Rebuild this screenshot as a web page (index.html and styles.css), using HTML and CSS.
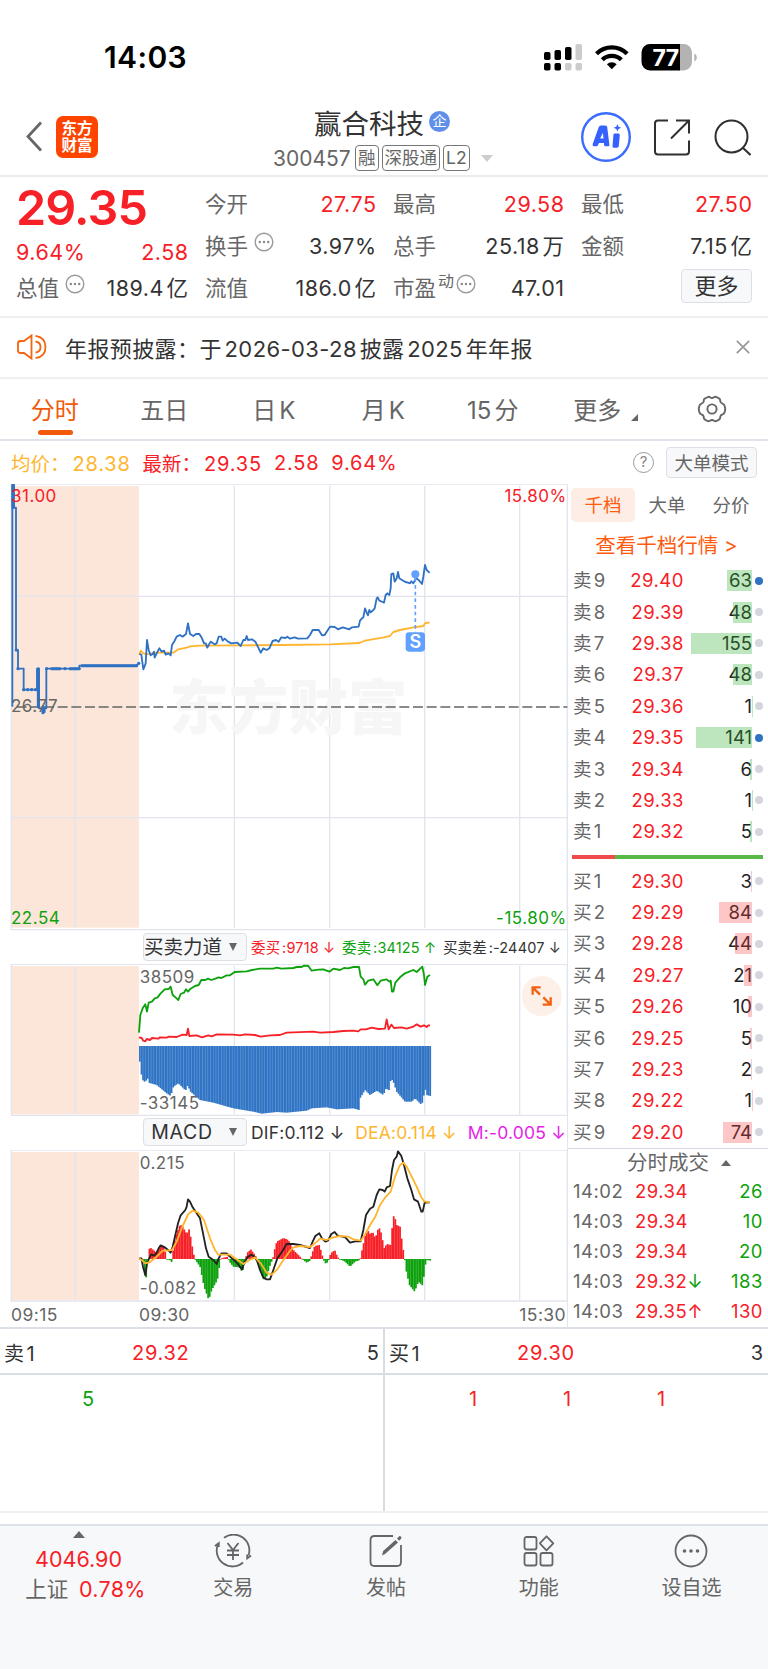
FILE: index.html
```html
<!DOCTYPE html>
<html lang="zh-CN">
<head>
  <meta charset="UTF-8">
  <meta name="viewport" content="width=device-width, initial-scale=1.0">
  <title>赢合科技 300457</title>
  <link rel="stylesheet" href="styles.css">
</head>
<body>
  <svg width="0" height="0" class="defs">
    <symbol id="dots" viewBox="0 0 20 20">
      <circle cx="10" cy="10" r="8.800" fill="none" stroke="#999" stroke-width="1.400"/>
      <circle cx="5.800" cy="10" r="1.200" fill="#888"/><circle cx="10" cy="10" r="1.200" fill="#888"/><circle cx="14.200" cy="10" r="1.200" fill="#888"/>
    </symbol>
  </svg>

  <!-- 状态栏 -->
  <div class="status-bar">
    <span class="clock">14:03</span>
    <svg class="status-icons" width="154" height="28" viewBox="0 0 154 28">
      <g fill="#000">
        <rect x="1" y="9" width="6.5" height="8" rx="1.8"/>
        <rect x="11.5" y="7" width="6.5" height="10" rx="1.8"/>
        <rect x="22" y="4" width="6.5" height="13" rx="1.8"/>
        <rect x="1" y="20" width="6.5" height="7.5" rx="1.8"/>
        <rect x="11.5" y="20" width="6.5" height="7.5" rx="1.8"/>
      </g>
      <g fill="#ccc">
        <rect x="32.5" y="1" width="6.5" height="16" rx="1.8"/>
        <rect x="22" y="20" width="6.5" height="7.5" rx="1.8"/>
        <rect x="32.5" y="20" width="6.5" height="7.5" rx="1.8"/>
      </g>
      <g fill="none" stroke="#000" stroke-width="4.2">
        <path d="M53.5 10.8a21.5 21.5 0 0 1 30.6 0"/>
        <path d="M59.3 16.8a13.4 13.4 0 0 1 19 0"/>
      </g>
      <path d="M68.8 26.3l-4.9-5a7 7 0 0 1 9.8 0z"/>
      <path d="M136 1h4.500a8.500 8.500 0 0 1 8.500 8.500v9.500a8.500 8.500 0 0 1-8.500 8.500H136z" fill="#b3b3b3"/>
      <path d="M107 1h30v26.500h-30a8.500 8.500 0 0 1-8.500-8.500v-9.500a8.500 8.500 0 0 1 8.500-8.500z"/>
      <path d="M151.300 10.500q2.500 1 2.500 4t-2.500 4z" fill="#b3b3b3"/>
      <text x="109.500" y="22.500" class="battery-text">77</text>
    </svg>
  </div>

  <!-- 标题栏 -->
  <header class="header">
    <div class="header-left">
      <svg width="18" height="31" viewBox="0 0 18 31"><path d="M16 1.500L3 15.500L16 29.500" fill="none" stroke="#666" stroke-width="2.800"/></svg>
      <div class="logo"><span>东方</span><span>财富</span></div>
    </div>
    <div class="stock">
      <div class="stock-name">赢合科技<i class="qi">企</i></div>
      <div class="stock-code">
        <span class="code">300457</span>
        <span class="tag">融</span><span class="tag">深股通</span><span class="tag">L2</span>
        <i class="tri-down"></i>
      </div>
    </div>
    <div class="header-right">
      <svg width="50" height="50" viewBox="0 0 50 50">
        <circle cx="25" cy="25" r="23.800" fill="#fff" stroke="#3b6bff" stroke-width="2.400"/>
        <path d="M11.500 32.500l6.300-17.500q.6-1.600 2.200-1.600h4.300q1.700 0 1.900 1.700l2.200 17.600q.1 1.500-1.200 1.500h-2.700q-1.300 0-1.400-1.300l-.2-2h-5l-.8 2q-.5 1.300-1.700 1.300h-2.700q-1.400 0-.9-1.700z" fill="#3562ff"/>
        <path d="M19.200 26.500h3.300l-.6-5.800z" fill="#fff"/>
        <path d="M33.200 21.500h4.200q1.600 0 1.400 1.600l-1 11q-.2 1.700-1.700 1.700h-3.200q-1.500 0-1.400-1.600l.9-11q.1-1.600.8-1.700z" fill="#3562ff"/>
        <path d="M36.400 12l1.100 2.700l2.700 1.100l-2.700 1.100l-1.100 2.700l-1.100-2.700l-2.700-1.100l2.700-1.100z" fill="#3562ff"/>
      </svg>
      <svg class="share" width="36" height="37" viewBox="0 0 36 37" fill="none" stroke="#2f2f2f" stroke-width="2">
        <path d="M14 1.500H4q-3 0-3 3v28q0 3 3 3h28q3 0 3-3v-11"/>
        <path d="M22 1.500h13V14.500M35 1.500L17 19.500"/>
      </svg>
      <svg width="37" height="37" viewBox="0 0 37 37" fill="none" stroke="#2f2f2f" stroke-width="2">
        <circle cx="17.500" cy="17.500" r="16"/><path d="M28.500 28.500l8 7.500"/>
      </svg>
    </div>
  </header>

  <!-- 行情 -->
  <section class="quote">
    <div class="quote-main">
      <div class="price">29.35</div>
      <div class="pair red"><b>9.64%</b><b>2.58</b></div>
      <div class="pair"><span>总值<svg class="more-dot"><use href="#dots"/></svg></span><b>189.4亿</b></div>
    </div>
    <div class="quote-col">
      <div class="pair"><span>今开</span><b class="red">27.75</b></div>
      <div class="pair"><span>换手<svg class="more-dot"><use href="#dots"/></svg></span><b>3.97%</b></div>
      <div class="pair"><span>流值</span><b>186.0亿</b></div>
    </div>
    <div class="quote-col">
      <div class="pair"><span>最高</span><b class="red">29.58</b></div>
      <div class="pair"><span>总手</span><b>25.18万</b></div>
      <div class="pair"><span>市盈<sup>动</sup><svg class="more-dot tight"><use href="#dots"/></svg></span><b>47.01</b></div>
    </div>
    <div class="quote-col">
      <div class="pair"><span>最低</span><b class="red">27.50</b></div>
      <div class="pair"><span>金额</span><b>7.15亿</b></div>
      <div class="pair end"><button class="more-btn">更多</button></div>
    </div>
  </section>

  <div class="notice">
    <svg width="31" height="26" viewBox="0 0 31 26" fill="none" stroke="#f5640f" stroke-width="1.800">
      <path d="M14.500 1.500v23l-7.500-5.500H3.500q-2.500 0-2.500-2.500v-7q0-2.500 2.500-2.500H7z"/>
      <path d="M18.500 7.500q5 .6 5 5.500t-5 5.500M18.500 1.800q10 1.500 10 11.200t-10 11.200"/>
    </svg>
    <span class="notice-text">年报预披露：于2026-03-28披露2025年年报</span>
    <svg width="14" height="14" viewBox="0 0 14 14"><path d="M.8.8l12.400 12.400M13.200.8L.8 13.200" stroke="#999" stroke-width="1.700"/></svg>
  </div>

  <nav class="tabs">
    <span class="active">分时</span>
    <span>五日</span>
    <span>日K</span>
    <span>月K</span>
    <span>15分</span>
    <span class="tab-more">更多<i class="corner"></i></span>
    <span>
      <svg width="30" height="28" viewBox="0 0 30 28" fill="none" stroke="#666" stroke-width="1.900">
        <path d="M10.500 2.300Q12 1.200 13 2.300Q15 3.700 17 2.300Q18.500 1.200 20 2.300L22.300 3.600Q23.500 4.500 23.200 6.200Q23.500 8.300 25.800 8.800Q27.200 9.300 27.600 10.800Q28.800 14 27.600 17.200Q27.200 18.700 25.800 19.200Q23.500 19.700 23.200 21.800Q23.500 23.500 22.300 24.400L20 25.700Q18.500 26.800 17 25.700Q15 24.300 13 25.700Q11.500 26.800 10 25.700L7.700 24.400Q6.500 23.500 6.800 21.800Q6.500 19.700 4.200 19.200Q2.800 18.700 2.400 17.200Q1.200 14 2.400 10.800Q2.800 9.300 4.200 8.800Q6.500 8.300 6.800 6.200Q6.500 4.500 7.700 3.600Z"/>
        <circle cx="15" cy="14" r="4.600"/>
      </svg>
    </span>
  </nav>

  <div class="info">
    <span class="avg">均价：<b>28.38</b></span>
    <span class="red">最新：<b>29.35</b></span>
    <b class="red">2.58</b>
    <b class="red">9.64%</b>
    <i class="help">?</i>
    <button class="big-btn">大单模式</button>
  </div>

  <main class="board">
    <div class="charts">
      <!-- 分时走势 -->
      <svg class="chart" width="568" height="447" viewBox="0 312 1704 1341">
        <rect x="33" y="318" width="384" height="1325" fill="#fce6da"/>
        <g class="grid">
          <path d="M33 312H1704M33 649H1702M33 1313H1702M33 1649H1704"/>
          <path d="M34 312V1650M225 318V1643M703 318V1643M989 318V1643M1274 318V1643M1559 318V1643M1702 312V1653"/>
        </g>
        <text x="508" y="1048" class="watermark" textLength="714">东方财富</text>
        <path class="zero" d="M50 981H1702"/>
        <path class="line avg-line" d="M418 825L422 812L430 820L440 823L470 818L520 818L535 808L560 803L570 799L600 797L720 796L850 795L990 793L1078 789L1095 782L1130 776L1152 772L1170 768L1180 756L1200 750L1240 742L1270 738L1276 729L1289 728"/>
        <path class="line price-line" d="M37 980V315H42V383H48V810H54V866H71V929H111V866H117V985H130V996H134V985H139V866H238V857H408L417 850"/>
        <path d="M39 315V383M155 866H180M210 866H238M246 857H410M115 866V980M129 980V998" stroke="#2f72c4" stroke-width="9" stroke-linecap="round"/>
        <g fill="#2f72c4">
          <circle cx="71" cy="929" r="5"/><circle cx="83" cy="929" r="5"/><circle cx="95" cy="929" r="5"/><circle cx="107" cy="929" r="5"/>
          <circle cx="54" cy="866" r="5"/><circle cx="140" cy="866" r="5"/><circle cx="195" cy="866" r="5"/><circle cx="416" cy="850" r="5"/><circle cx="49" cy="810" r="5"/>
        </g>
        <path class="line price-line" d="M418 822L424 824L430 868L437 850L441 780L446 810L452 826L458 822L462 815L464 833L470 820L478 805L485 815L492 812L497 824L505 820L512 826L516 795L524 782L530 770L540 765L548 770L558 762L564 730L570 762L580 768L588 762L598 762L606 775L612 790L617 790L622 803L632 785L644 793L650 790L656 770L664 770L668 782L674 776L684 785L694 790L712 788L722 798L730 780L736 780L740 768L744 780L756 778L766 785L776 805L782 818L790 805L800 810L808 805L818 783L828 780L836 785L844 772L856 774L862 770L870 776L884 772L894 776L922 775L930 765L938 750L956 750L966 766L974 765L982 752L990 740L1004 741L1014 748L1028 742L1048 748L1056 742L1076 740L1080 722L1086 715L1090 712L1095 685L1100 698L1104 706L1108 690L1112 697L1120 690L1124 685L1130 655L1133 652L1138 662L1148 666L1152 668L1157 645L1162 640L1168 645L1172 625L1174 582L1180 580L1184 605L1190 595L1194 576L1198 595L1206 600L1216 606L1224 608L1230 610L1234 604L1240 610L1248 594L1256 600L1266 612L1270 590L1275 555L1280 570L1285 575L1289 578"/>
        <path d="M1246 595V757" stroke="#62a0ff" stroke-width="5" stroke-dasharray="11 9"/>
        <circle cx="1246" cy="583" r="12" fill="#62a0ff"/>
        <rect x="1217" y="757" width="58" height="58" rx="10" fill="#62a0ff"/>
        <text x="1246" y="805" class="mark">S</text>
        <g class="axis">
          <text x="33" y="365" class="t-red">31.00</text>
          <text x="1700" y="365" class="t-red t-end">15.80%</text>
          <text x="33" y="996">26.77</text>
          <text x="33" y="1631" class="t-green">22.54</text>
          <text x="1700" y="1631" class="t-green t-end">-15.80%</text>
        </g>
      </svg>

      <div class="picker">
        <button class="picker-btn">买卖力道<i></i></button>
        <p class="small"><span class="red">委买:9718 ↓</span><span class="green">委卖:34125 ↑</span><span>买卖差:-24407 ↓</span></p>
      </div>

      <svg class="chart" width="568" height="152" viewBox="0 132 1704 456">
        <rect x="33" y="138" width="384" height="445" fill="#fce6da"/>
        <g class="grid">
          <path d="M33 133H1704M33 586H1704"/>
          <path d="M34 132V586M225 138V583M703 138V583M989 138V583M1274 138V583M1559 138V583M1702 132V588"/>
        </g>
        <g id="force"></g>
        <path class="line" stroke="#f72027" d="M417 352L425 354L430 362L436 364L440 357L450 360L456 354L475 356L480 352L500 353L505 350L530 351L548 344L560 345L564 326L568 348L590 346L606 352L625 346L635 349L650 343L700 344L720 346L735 343L765 345L782 350L810 346L840 345L860 338L940 335L960 338L1000 336L1030 333L1060 332L1075 334L1082 328L1098 328L1115 323L1135 327L1155 326L1160 298L1166 328L1174 314L1182 324L1205 322L1220 326L1240 320L1250 313L1262 320L1272 316L1280 321L1285 316L1290 316"/>
        <path class="line" stroke="#0da10d" d="M417 338L421 285L428 265L436 253L441 275L446 248L456 245L464 235L472 233L482 220L494 208L506 207L512 200L518 225L530 235L535 240L542 222L552 218L558 208L564 215L572 206L585 198L596 195L604 180L616 180L624 176L634 180L646 176L656 172L664 174L680 166L690 166L704 156L740 154L756 150L780 146L820 146L830 143L845 146L880 144L890 141L905 141L912 137L925 138L935 152L955 149L970 148L988 155L1000 146L1020 150L1032 144L1044 145L1060 141L1077 141L1082 170L1090 178L1095 194L1105 182L1120 178L1132 196L1142 182L1160 178L1168 185L1172 182L1176 215L1180 215L1186 188L1200 172L1215 160L1240 150L1250 156L1267 140L1272 165L1275 195L1282 170L1290 165"/>
        <g class="axis"><text x="419" y="189">38509</text><text x="419" y="566">-33145</text></g>
        <circle cx="1625" cy="228" r="60" fill="#fdf0e8"/>
        <path d="M1598 224V202H1622M1598 202L1620 224M1652 232V254H1628M1652 254L1630 232" fill="none" stroke="#f26211" stroke-width="7"/>
      </svg>

      <div class="picker tall">
        <button class="picker-btn macd-btn">MACD<i></i></button>
        <p><span>DIF:0.112 ↓</span><span class="avg">DEA:0.114 ↓</span><span class="purple">M:-0.005 ↓</span></p>
      </div>

      <svg class="chart" width="568" height="152" viewBox="0 120 1704 456">
        <rect x="33" y="126" width="384" height="444" fill="#fce6da"/>
        <g class="grid">
          <path d="M33 120H1704M33 573H1704"/>
          <path d="M34 120V576M225 126V570M703 126V570M989 126V570M1274 126V570M1559 126V570M1702 120V576"/>
        </g>
        <g id="macd"></g>
        <path class="line" stroke="#222" d="M418 445L424 445L429 470L436 496L441 462L446 448L454 433L462 437L468 432L476 415L482 406L494 412L504 420L512 428L518 410L526 375L534 340L542 316L556 300L560 290L564 268L570 275L578 292L590 310L600 325L608 365L618 415L626 440L640 450L650 462L656 445L664 430L680 430L688 438L700 448L712 460L726 478L734 455L744 440L754 434L764 440L772 455L780 480L790 503L800 508L810 508L820 480L832 445L846 425L860 402L880 402L900 405L930 414L938 395L946 378L958 370L966 385L976 395L984 392L994 372L1004 366L1012 376L1036 382L1050 398L1066 394L1082 394L1090 360L1098 315L1110 296L1120 290L1130 255L1138 238L1148 240L1154 245L1160 232L1170 228L1176 180L1182 150L1190 140L1194 124L1204 138L1212 165L1222 205L1234 240L1242 268L1254 275L1264 305L1268 305L1274 278L1289 277"/>
        <path class="line avg-line" d="M418 446L425 450L436 460L450 456L470 440L488 422L500 422L516 420L530 395L548 348L565 312L578 302L595 308L612 330L630 385L645 420L655 434L690 434L710 448L730 462L748 450L765 442L782 460L800 488L815 494L832 478L850 450L868 425L880 412L900 408L930 411L945 400L960 386L980 390L1000 382L1020 378L1045 380L1060 388L1082 392L1096 372L1112 342L1126 320L1140 285L1156 262L1172 245L1185 200L1200 165L1210 158L1220 170L1235 200L1250 230L1264 262L1272 274L1289 277"/>
        <g class="axis"><text x="419" y="176">0.215</text><text x="419" y="553">-0.082</text></g>
      </svg>

      <div class="time-axis"><span>09:15</span><span class="open">09:30</span><span class="close">15:30</span></div>
    </div>

    <!-- 盘口 -->
    <aside class="depth">
      <div class="depth-tabs"><span class="on">千档</span><span>大单</span><span>分价</span></div>
      <div class="depth-link">查看千档行情 &gt;</div>
      <div id="sell" class="orders"></div>
      <div class="ratio"><i></i></div>
      <div id="buy" class="orders"></div>
      <div class="deal-title">分时成交<i class="tri-up"></i></div>
      <div id="deals" class="deals"></div>
    </aside>
  </main>

  <section class="queue">
    <div class="queue-side">
      <div class="queue-head"><span>卖1</span><b>29.32</b><em>5</em></div>
      <div class="queue-list green"><span>5</span></div>
    </div>
    <div class="queue-side">
      <div class="queue-head"><span>买1</span><b>29.30</b><em>3</em></div>
      <div class="queue-list red"><span>1</span><span>1</span><span>1</span></div>
    </div>
  </section>

  <footer class="bottom">
    <div class="index">
      <i class="tri-up"></i>
      <div class="red">4046.90</div>
      <div>上证<span class="red">0.78%</span></div>
    </div>
    <div class="item">
      <svg width="38" height="34" viewBox="0 0 38 34" fill="none" stroke="#666" stroke-width="1.800">
        <path d="M10 3.800A15.800 15.800 0 0 1 34.500 21.500M29 28.500A15.800 15.800 0 0 1 4.200 10"/>
        <path d="M1 12l3.800-3v4M37 21.500l-3.800 3v-4"/>
        <path d="M13.500 9l5.500 7l5.500-7M19 16v10M13 16.500h12M13 21h12"/>
      </svg>
      <span>交易</span>
    </div>
    <div class="item">
      <svg width="34" height="34" viewBox="0 0 34 34" fill="none" stroke="#666" stroke-width="1.800">
        <path d="M24 2H5.500Q1.500 2 1.500 6v22q0 4 4 4H28q4 0 4-4V11"/>
        <path d="M13 21.500l1.200-4.500L26.500 6l2.500 2.500L16 20z" fill="#666" stroke="none"/>
        <path d="M28 4.500l2.500-2.500q2 0 2 2.200l-2.300 2.500z" fill="#666" stroke="none"/>
      </svg>
      <span>发帖</span>
    </div>
    <div class="item">
      <svg width="32" height="34" viewBox="0 0 32 34" fill="none" stroke="#666" stroke-width="1.800">
        <rect x="1.500" y="3" width="12" height="12.500" rx="2"/>
        <rect x="1.500" y="19" width="12" height="12.500" rx="2"/>
        <rect x="17.500" y="19" width="12" height="12.500" rx="2"/>
        <path d="M23.500 2.300L30.300 9.300L23.500 16.300L16.800 9.300z" stroke-linejoin="round"/>
      </svg>
      <span>功能</span>
    </div>
    <div class="item">
      <svg width="34" height="34" viewBox="0 0 34 34">
        <circle cx="17" cy="17" r="15.500" fill="none" stroke="#666" stroke-width="1.800"/>
        <g fill="#666"><circle cx="10.500" cy="17" r="1.800"/><circle cx="17" cy="17" r="1.800"/><circle cx="23.500" cy="17" r="1.800"/></g>
      </svg>
      <span>设自选</span>
    </div>
  </footer>

  <script src="main.js"></script>
</body>
</html>
```
FILE: styles.css
```css
* {
  box-sizing: border-box;
}
body {
  margin: 0;
  width: 768px;
  height: 1669px;
  overflow: hidden;
  background: #fff;
  font-family: Inter, 'Noto Sans CJK SC', sans-serif;
  color: #666;
  text-autospace: normal;
}
i, em {
  font-style: normal;
}
b {
  font-weight: 400;
}
button {
  font-family: inherit;
  padding: 0;
  border: 1px solid #dcdfe6;
  border-radius: 4px;
  background: #f7f8fa;
  color: #333;
}
svg {
  display: block;
  flex: none;
}
.defs {
  position: absolute;
}
.red { color: #f72027; }
.green { color: #0da10d; }
.avg { color: #ffb52e; }
.purple { color: #e323e8; }

/* 状态栏 */
.status-bar {
  height: 100px;
  padding: 14px 71px 0 104px;
  display: flex;
  align-items: center;
  justify-content: space-between;
}
.clock {
  font-size: 30px;
  font-weight: 600;
  color: #000;
  letter-spacing: 0.4px;
}
.battery-text {
  font-size: 23px;
  font-weight: 700;
  letter-spacing: -0.5px;
  fill: #fff;
}

/* 标题栏 */
.header {
  height: 77px;
  display: flex;
  justify-content: space-between;
  border-bottom: 2px solid #ebebeb;
  padding: 0 17px 0 25px;
}
.header-left {
  width: 221px;
  height: 73px;
  display: flex;
  align-items: center;
  gap: 13px;
}
.logo {
  width: 42px;
  height: 42px;
  border-radius: 7px;
  background: #ff4400;
  color: #fff;
  font-size: 15.5px;
  font-weight: 700;
  line-height: 17px;
  text-align: center;
  padding-top: 4px;
}
.logo span {
  display: block;
}
.stock {
  flex: none;
  width: 259px;
  padding-top: 1px;
}
.stock-name {
  height: 41px;
  padding-left: 60px;
  display: flex;
  align-items: center;
  font-size: 27.5px;
  color: #333;
}
.qi {
  width: 21px;
  height: 21px;
  margin-left: 5px;
  border-radius: 50%;
  background: #5f8fe8;
  color: #fff;
  font-size: 14px;
  line-height: 20px;
  text-align: center;
}
.stock-code {
  height: 32px;
  padding-left: 19px;
  display: flex;
  align-items: center;
  gap: 3px;
}
.code {
  font-size: 21px;
  width: 79px;
}
.tag {
  flex: none;
  height: 26px;
  padding: 0 2px;
  border: 1px solid #777;
  border-radius: 4px;
  font-size: 17.5px;
  line-height: 24px;
}
.tri-down {
  margin-left: 8px;
  border: 6px solid transparent;
  border-top: 7px solid #ccc;
  border-bottom: 0;
}
.header-right {
  width: 230px;
  height: 74px;
  display: flex;
  align-items: center;
  justify-content: flex-end;
}
.share {
  margin: 0 24px 0 23px;
}

/* 行情 */
.quote {
  height: 141px;
  border-bottom: 2px solid #f0f0f0;
  padding: 6px 14px 0 17px;
  display: grid;
  grid-template-columns: 171px 171px 171px 171px;
  column-gap: 17px;
  font-size: 21.5px;
}
.price {
  height: 51px;
  line-height: 49px;
  font-size: 48.5px;
  font-weight: 600;
  letter-spacing: -0.9px;
  margin-left: -1px;
  color: #f72027;
}
.pair {
  height: 42px;
  display: flex;
  align-items: center;
  justify-content: space-between;
  line-height: 30px;
}
.quote-main .pair {
  height: 36px;
}
.quote-main .pair > :first-child {
  margin-left: -1px;
}
.pair.end {
  justify-content: flex-end;
  align-items: flex-start;
}
.pair b {
  color: #333;
  letter-spacing: 0.5px;
  margin-right: -0.5px;
}
.pair.red b, .pair b.red {
  color: #f72027;
}
.pair span {
  display: flex;
}
.pair sup {
  font-size: 16px;
  line-height: 16px;
  margin-left: 2px;
}
.more-dot {
  width: 20px;
  height: 20px;
  margin: 1px 0 0 6px;
}
.more-dot.tight {
  margin-left: 2px;
}
.more-btn {
  width: 71px;
  height: 34px;
  margin-top: 2px;
  font-size: 22px;
  line-height: 30px;
}

/* 公告 */
.notice {
  height: 61px;
  border-bottom: 2px solid #f0f0f0;
  padding: 0 18px 2px 17px;
  display: flex;
  align-items: center;
}
.notice-text {
  flex: 1;
  margin-left: 17px;
  font-size: 22px;
  letter-spacing: 0.4px;
  color: #333;
}

/* 周期 */
.tabs {
  height: 62px;
  border-bottom: 2px solid #e2e2ea;
  display: grid;
  grid-template-columns: repeat(7, 109.500px);
  font-size: 24px;
}
.tabs span {
  position: relative;
  height: 59px;
  display: flex;
  align-items: center;
  justify-content: center;
}
.tabs .tab-more {
  padding-left: 7px;
}
.tabs .active {
  color: #f05a0a;
}
.tabs .active::after {
  content: '';
  position: absolute;
  left: 38px;
  bottom: 3px;
  width: 35px;
  height: 5px;
  border-radius: 3px;
  background: #f05a0a;
}
.corner {
  align-self: flex-end;
  margin: 0 0 17px 10px;
  border-left: 7px solid transparent;
  border-bottom: 7px solid #666;
}

.info {
  height: 43px;
  padding: 0 11px;
  display: flex;
  align-items: center;
  gap: 12px;
  font-size: 19.5px;
}
.info b {
  font-size: 20px;
  letter-spacing: 0.8px;
}
.info span b {
  margin-left: 3px;
}
.help {
  width: 21px;
  height: 21px;
  margin-left: auto;
  border: 1.500px solid #999;
  border-radius: 50%;
  color: #888;
  font-size: 15px;
  line-height: 18px;
  text-align: center;
}
.big-btn {
  width: 91px;
  height: 31px;
  color: #666;
  font-size: 18.5px;
  line-height: 28px;
}

/* 图表 */
.board {
  height: 843px;
  display: flex;
}
.charts {
  width: 568px;
  flex: none;
}
.grid path {
  fill: none;
  stroke: #e2e4ee;
  stroke-width: 4;
}
.zero {
  stroke: #666;
  stroke-width: 5;
  stroke-dasharray: 30 11;
}
.line {
  fill: none;
  stroke-width: 5.500;
  stroke-linejoin: round;
}
.price-line {
  stroke: #2f72c4;
}
.avg-line {
  stroke: #ffb52e;
}
.watermark {
  font-size: 178px;
  font-weight: 900;
  fill: #f6f6f6;
}
.mark {
  font-size: 54px;
  font-weight: 600;
  fill: #fff;
  text-anchor: middle;
}
.axis {
  font-size: 51px;
  letter-spacing: 1.5px;
  fill: #666;
}
.t-red { fill: #f72027; }
.t-green { fill: #0da10d; }
.t-end { text-anchor: end; }

.picker {
  height: 33px;
  padding: 0 0 2px 143px;
  border-right: 1px solid #e2e4ee;
  display: flex;
  align-items: center;
  color: #333;
}
.picker.tall {
  height: 34px;
}
.picker-btn {
  position: relative;
  width: 104px;
  height: 28px;
  padding-right: 26px;
  font-size: 19.5px;
  line-height: 24px;
  white-space: nowrap;
}
.macd-btn {
  letter-spacing: 0.7px;
}
.picker-btn i {
  position: absolute;
  right: 9px;
  top: 9px;
  border: 4px solid transparent;
  border-top: 8px solid #666;
  border-bottom: 0;
}
.picker p {
  flex: 1;
  margin: 0 1px 0 4px;
  display: flex;
  justify-content: space-between;
  font-size: 17.5px;
  letter-spacing: 0.2px;
  white-space: nowrap;
}
.picker .small {
  margin-right: 6px;
  font-size: 14.5px;
  letter-spacing: 0.15px;
}
.time-axis {
  height: 25px;
  padding: 0 1px 0 11px;
  border-right: 1px solid #e2e4ee;
  display: flex;
  font-size: 17.5px;
  letter-spacing: 0.4px;
  line-height: 25px;
}
.time-axis span {
  width: 128px;
}
.time-axis .close {
  margin-left: auto;
  text-align: right;
}

/* 盘口 */
.depth {
  flex: 1;
  padding: 4px 0 0 3px;
  font-size: 18.5px;
}
.depth-tabs {
  display: grid;
  grid-template-columns: repeat(3, 64px);
  line-height: 34px;
  text-align: center;
}
.depth-tabs .on {
  background: #feede4;
  color: #ff5c0f;
  border-radius: 5px;
}
.depth-link {
  height: 43px;
  padding-right: 6px;
  text-align: center;
  font-size: 20.5px;
  line-height: 48px;
  color: #ff5c0f;
}
.order {
  height: 31.400px;
  display: grid;
  grid-template-columns: 33px 78px 68px 14px;
  align-items: center;
  padding-left: 2px;
  line-height: 21px;
}
.order b {
  text-align: right;
  letter-spacing: 0.5px;
  color: #f72027;
}
.vol {
  position: relative;
  height: 21px;
  text-align: right;
  color: #222;
}
.vol i {
  position: absolute;
  right: 0;
  top: 0;
  height: 21px;
  background: rgba(54, 178, 54, 0.320);
}
#buy .vol i {
  background: rgba(247, 70, 70, 0.300);
}
.dot {
  width: 8px;
  height: 8px;
  margin-left: 3px;
  border-radius: 50%;
  background: #d3d6dc;
}
.dot.own {
  background: #2f72c4;
}
.ratio {
  height: 4px;
  margin: 7px 5px 7px 1px;
  background: #5ab946;
}
.ratio i {
  display: block;
  width: 43px;
  height: 4px;
  background: #f04b4b;
}
.deal-title {
  height: 28px;
  margin-left: -3px;
  padding-left: 59px;
  border-top: 1px solid #d5d9e2;
  display: flex;
  align-items: center;
  font-size: 20.5px;
  line-height: 27px;
}
.tri-up {
  border: 5px solid transparent;
  border-bottom: 6px solid #666;
  border-top: 0;
}
.deal-title .tri-up {
  margin-left: 12px;
}
.deal {
  height: 30.100px;
  display: flex;
  align-items: center;
  padding: 0 5px 0 2px;
  letter-spacing: 0.5px;
}
.deal time {
  width: 62px;
}
.deal em {
  margin-left: auto;
}

/* 买卖队列 */
.queue {
  height: 186px;
  border-top: 2px solid #dcdfe6;
  border-bottom: 2px solid #f0f0f0;
  display: grid;
  grid-template-columns: 384px 384px;
}
.queue-side + .queue-side {
  border-left: 2px solid #d9dce3;
  margin-left: -1px;
}
.queue-head {
  height: 46px;
  padding: 3px 5px 0 4px;
  border-bottom: 2px solid #d9dde4;
  display: grid;
  grid-template-columns: 128px 120px 1fr;
  align-items: center;
  font-size: 20px;
  color: #333;
}
.queue-head b {
  color: #f72027;
  letter-spacing: 0.7px;
}
.queue-head em {
  text-align: right;
}
.queue-list {
  padding: 12px 8px 0 41px;
  display: grid;
  grid-template-columns: repeat(4, 94px);
  font-size: 20px;
  text-align: center;
}

/* 底部导航 */
.bottom {
  height: 145px;
  margin-top: 11px;
  border-top: 2px solid #dfe3ec;
  background: #f7f8fa;
  display: grid;
  grid-template-columns: 157px repeat(4, 152.700px);
  font-size: 20px;
}
.index {
  padding-top: 5px;
  display: flex;
  flex-direction: column;
  align-items: center;
  font-size: 21.5px;
  line-height: 30px;
}
.index .tri-up {
  border-width: 0 6px 7px;
  margin-bottom: 6px;
}
.index div:last-child {
  padding-left: 14px;
}
.index div .red {
  margin-left: 8px;
  letter-spacing: 0.3px;
}
.item {
  padding-top: 8px;
  display: flex;
  flex-direction: column;
  align-items: center;
  gap: 6px;
}
.item span {
  line-height: 28px;
}
```
FILE: main.js
```js
// 盘口: [价格, 手数, 是否大单提示]
const sells = [[29.40, 63, 1], [29.39, 48], [29.38, 155], [29.37, 48], [29.36, 1], [29.35, 141, 1], [29.34, 6], [29.33, 1], [29.32, 5]];
const buys = [[29.30, 3], [29.29, 84], [29.28, 44], [29.27, 21], [29.26, 10], [29.25, 5], [29.23, 2], [29.22, 1], [29.20, 74]];
const deals = [
  ["14:02", "29.34", 26, "green"],
  ["14:03", "29.34", 10, "green"],
  ["14:03", "29.34", 20, "green"],
  ["14:03", "29.32", 183, "green", "↓"],
  ["14:03", "29.35", 130, "red", "↑"]
];

function renderOrders(id, name, list) {
  document.getElementById(id).innerHTML = list.map(([price, vol, own], i) => {
    const level = id === "sell" ? 9 - i : i + 1;
    return `<div class="order"><span>${name}${level}</span><b>${price.toFixed(2)}</b>` +
      `<span class="vol">${vol}<i style="width:${(vol * 0.394).toFixed(1)}px"></i></span>` +
      `<i class="dot${own ? " own" : ""}"></i></div>`;
  }).join("");
}
renderOrders("sell", "卖", sells);
renderOrders("buy", "买", buys);

document.getElementById("deals").innerHTML = deals.map(([time, price, vol, color, arrow]) =>
  `<div class="deal"><time>${time}</time><span class="red">${price}</span>` +
  `<span class="${color}">${arrow || ""}</span><em class="${color}">${vol}</em></div>`
).join("");

// 柱状图, 每分钟一根
const STEP = 4.76;
function valueAt(points, x) {
  for (let i = 1; i < points.length; i++) {
    const [x0, y0] = points[i - 1];
    const [x1, y1] = points[i];
    if (x <= x1) return y0 + (y1 - y0) * (x - x0) / (x1 - x0);
  }
  return points[points.length - 1][1];
}
function drawBars(id, base, points, colorOf, width) {
  let html = "";
  for (let x = 417; x < 1290; x += STEP) {
    const y = valueAt(points, x + STEP / 2);
    const h = Math.max(Math.abs(y - base), 2);
    html += `<rect x="${x.toFixed(1)}" y="${Math.min(y, base).toFixed(1)}" width="${width}" height="${h.toFixed(1)}" fill="${colorOf(y)}"/>`;
  }
  document.getElementById(id).innerHTML = html;
}

const force = [[417,385],[421,452],[430,485],[438,485],[441,462],[445,488],[470,495],[500,520],[512,528],[520,500],[535,490],[555,510],[560,510],[564,488],[568,512],[600,540],[640,548],[700,565],[760,575],[785,581],[830,576],[860,578],[920,572],[935,565],[980,562],[1010,568],[1060,565],[1077,570],[1080,535],[1095,510],[1110,525],[1130,512],[1150,525],[1160,500],[1165,520],[1172,480],[1178,480],[1190,515],[1215,545],[1235,545],[1245,535],[1265,555],[1270,535],[1275,505],[1280,525],[1291,528]];
drawBars("force", 378, force, () => "#2f74c5", 5.2);

const macd = [[417,447],[424,443],[428,455],[434,485],[438,507],[442,460],[446,420],[450,412],[460,420],[470,428],[478,410],[490,405],[497,430],[500,447],[508,447],[514,460],[518,430],[526,380],[540,343],[548,350],[560,372],[568,356],[574,395],[580,430],[586,450],[600,470],[612,530],[626,570],[635,540],[652,510],[658,470],[661,447],[670,443],[684,440],[688,455],[700,470],[718,472],[727,487],[735,455],[740,430],[752,418],[765,435],[772,450],[780,480],[790,508],[800,500],[812,460],[818,449],[822,425],[830,395],[850,384],[865,390],[880,420],[900,440],[906,447],[920,458],[930,452],[936,430],[944,408],[958,405],[965,430],[970,449],[978,463],[986,450],[992,430],[1004,420],[1012,440],[1018,447],[1035,455],[1050,470],[1065,455],[1080,450],[1086,420],[1096,375],[1104,362],[1110,372],[1118,366],[1126,385],[1136,350],[1144,370],[1152,415],[1160,402],[1172,405],[1177,345],[1182,312],[1190,345],[1200,350],[1208,410],[1214,448],[1218,480],[1228,525],[1244,545],[1255,515],[1268,527],[1274,480],[1278,450],[1292,452]];
drawBars("macd", 447, macd, y => y < 447 ? "#f72027" : "#0da10d", 5.2);
```
